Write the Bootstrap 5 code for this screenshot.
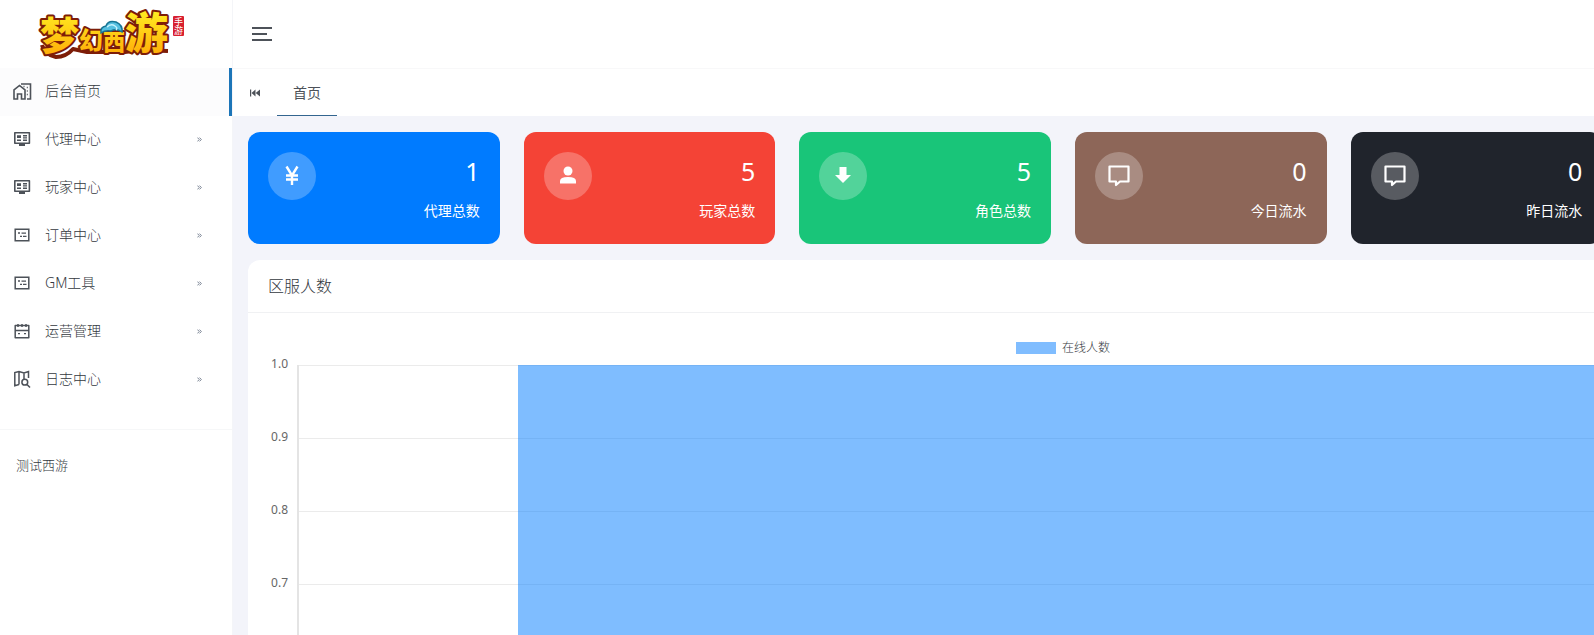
<!DOCTYPE html>
<html lang="zh-CN">
<head>
<meta charset="utf-8">
<meta name="viewport" content="width=device-width, initial-scale=1">
<title>后台首页</title>
<link href="https://cdn.jsdelivr.net/npm/bootstrap@5.3.0/dist/css/bootstrap.min.css" rel="stylesheet">
<style>
body{font-family:"Noto Sans","Noto Sans CJK SC",sans-serif;font-size:14px;line-height:20px;color:#4d5259;background:#f3f4fa}
.sidebar{width:232px;background:#fff;box-shadow:1px 0 0 #f4f5f8;z-index:1}
.brand-box{height:68px;padding-left:36px}
.side-link{height:48px;padding:0 30px 2px 12px;color:#33383e;text-decoration:none;font-weight:300}
.side-link svg{width:20px;height:20px;margin-right:13px;color:#4d5259}
.side-link svg.more{width:5px;height:5px;margin:0 0 0 auto;color:#7b8595}
.side-link.current{background:#fcfcfd;border-right:3px solid #1c75b8}
.side-foot{margin-top:25px;padding:25px 16px;border-top:1px solid #f6f7f8;font-size:13px;font-weight:300;color:#33383e}
.topbar{height:68px;background:#fff;padding-left:19px}
.icon-btn{border:0;background:none;padding:0;color:#4d5259;line-height:0}
.tabs{height:48px;background:#fff;border-top:1px solid #f8f8f9;padding-left:17px}
.tab-item{height:47px;width:60px;margin-left:16px;padding-top:2px;border-bottom:1px solid #33658f;color:#4d5259;text-decoration:none}
.board{min-width:1646px;padding:16px 0 0 16px}
.stats{gap:24px}
.stat{flex:0 0 calc((100% - 120px)/6);height:112px;border-radius:12px;padding:20px;color:#fff}
.round-icon{width:48px;height:48px;border-radius:50%;background:rgba(255,255,255,.25)}
.figure-no{font-size:25px;line-height:38px}
.stat-name{line-height:42px}
.c-blue{background:#007bff}.c-red{background:#f44336}.c-green{background:#19c579}.c-brown{background:#8d6658}.c-dark{background:#20242c}
.panel{margin-top:16px;background:#fff;border-radius:12px 12px 0 0}
.panel-title{font-size:16px;font-weight:300;line-height:24px;padding:14px 20px;margin:0;border-bottom:1px solid #f0f1f3;color:#33383e}
.legend-row{gap:6px;font-size:12px;line-height:16px;padding-top:27px;font-weight:300;color:#33383e}
.swatch{width:40px;height:12px;background:#80bdff}
.chart{margin:0 16px 0 20px}
.tick{height:73px;width:20px;font-size:12px;line-height:16px;text-align:right;color:#666}
.plot{display:grid;margin:9px 0 0 9px;border-left:2px solid #e4e4e4}
.plot>*{grid-area:1/1}
.plot-line{height:73px;border-top:1px solid #ebebeb}
.bar-layer{margin:0 14%;background:rgba(0,123,255,.5)}
</style>
</head>
<body>
<svg class="d-none">
<defs>
<symbol id="home" viewBox="0 0 20 20"><path d="M2 18V9l5.500-4.500L13 9v9h-3.500v-5h-4v5zM9 3h9.500v15H15M11.500 5.500h1M14.800 6.500h1M14.800 10h1M14.800 13.500h1" fill="none" stroke="currentColor" stroke-width="1.600"/></symbol>
<symbol id="screen" viewBox="0 0 20 20"><path d="M2.800 3.800h14.600v10.400H2.800z" fill="none" stroke="currentColor" stroke-width="1.600" stroke-linejoin="round"/><path d="M5 6.300h4v2.700H5zM11 6h4v1.400h-4zM11 8.200h4v1.400h-4zM5 10.500h4v1.400H5zM11 10.500h4v1.400h-4zM7 15h6v2H7z" fill="currentColor"/></symbol>
<symbol id="lists" viewBox="0 0 20 20"><path d="M3.200 4.200h13.600v11.600H3.200z" fill="none" stroke="currentColor" stroke-width="1.500"/><path d="M6 7.300h2v1.400H6zM9.500 7.500H14v1.200H9.500zM8 10.800h2v1.300H8zM11 10.800h3.500v1.300H11z" fill="currentColor"/></symbol>
<symbol id="cal" viewBox="0 0 20 20"><path d="M3.200 4.500h13.600v12.300H3.200zM3 9.500h14M6 3v3M10 3v3M14 3v3" fill="none" stroke="currentColor" stroke-width="1.500" stroke-linejoin="round"/><path d="M6 12h2v1.300H6zM12 12h2v1.300h-2z" fill="currentColor"/></symbol>
<symbol id="mapfind" viewBox="0 0 20 20"><path d="M7 15.500l-4.200 1.200V3.500L7 2.500l5 1.500 4.500-1.500V9M7 2.500v13M12 4v6" fill="none" stroke="currentColor" stroke-width="1.500"/><circle cx="12.800" cy="13.200" r="2.900" fill="none" stroke="currentColor" stroke-width="1.500"/><path d="M15 15.500l3 3" stroke="currentColor" stroke-width="1.600"/></symbol>
<symbol id="more" viewBox="0 0 6 6"><path d="M.5.700L2.700 3 .500 5.300M3 .700L5.200 3 3 5.300" fill="none" stroke="currentColor" stroke-width="1.200"/></symbol>
<symbol id="talk" viewBox="0 0 24 24"><path d="M2.500 2.500h19v15h-8.500l-4 3.500v-3.500H2.500z" fill="none" stroke="#fff" stroke-width="2.200" stroke-linejoin="round"/></symbol>
</defs>
</svg>
<div class="d-flex vh-100 overflow-hidden">
<aside class="sidebar flex-shrink-0">
<div class="brand-box">
<svg width="152" height="66" viewBox="36 0 152 66" role="img" aria-label="梦幻西游 手游">
<defs><linearGradient id="gold" x1="0" y1="10" x2="0" y2="56" gradientUnits="userSpaceOnUse"><stop offset="0" stop-color="#ffee22"/><stop offset="1" stop-color="#ffac08"/></linearGradient></defs>
<path d="M42 45q2 9 14 12 10 0 17-8l14 3 38 0 15-2 28 1" fill="none" stroke="#7d1d08" stroke-width="4" stroke-linejoin="round"/>
<g font-family="'Noto Sans CJK SC',sans-serif" font-weight="900" fill="url(#gold)" stroke="#7d1d08" stroke-width="4" stroke-linejoin="round" paint-order="stroke">
<text x="40" y="50" font-size="39">梦</text><text x="79" y="49" font-size="24">幻</text>
<text x="103" y="50" font-size="22">西</text><text x="125" y="49" font-size="43">游</text></g>
<path d="M101 33q-1-6 5-7 2-6 10-4 7 3 6 10-6-4-11-1-6-1-10 2z" fill="#55bfe0" stroke="#167493" stroke-width="1.500"/>
<path d="M107 27q4-4 8-1 3 2 1 4" fill="none" stroke="#c6f2fc" stroke-width="1.500"/>
<rect x="173" y="16" width="11" height="20" rx="1" fill="#d8202f"/>
<text x="178.500" y="17" font-family="'Noto Sans CJK SC',sans-serif" font-size="9" fill="#fff" style="writing-mode:vertical-rl">手游</text>
</svg>
</div>
<nav>
<a class="side-link current d-flex align-items-center" href="#"><svg><use href="#home"/></svg>后台首页</a>
<a class="side-link d-flex align-items-center" href="#"><svg><use href="#screen"/></svg>代理中心<svg class="more"><use href="#more"/></svg></a>
<a class="side-link d-flex align-items-center" href="#"><svg><use href="#screen"/></svg>玩家中心<svg class="more"><use href="#more"/></svg></a>
<a class="side-link d-flex align-items-center" href="#"><svg><use href="#lists"/></svg>订单中心<svg class="more"><use href="#more"/></svg></a>
<a class="side-link d-flex align-items-center" href="#"><svg><use href="#lists"/></svg>GM工具<svg class="more"><use href="#more"/></svg></a>
<a class="side-link d-flex align-items-center" href="#"><svg><use href="#cal"/></svg>运营管理<svg class="more"><use href="#more"/></svg></a>
<a class="side-link d-flex align-items-center" href="#"><svg><use href="#mapfind"/></svg>日志中心<svg class="more"><use href="#more"/></svg></a>
</nav>
<div class="side-foot">测试西游</div>
</aside>
<div class="flex-grow-1 overflow-hidden">
<header class="topbar d-flex align-items-center">
<button class="icon-btn" type="button" aria-label="菜单"><svg width="22" height="16"><path d="M1 2h20M1 8h15M1 14h20" stroke="currentColor" stroke-width="2"/></svg></button>
</header>
<div class="tabs d-flex align-items-center">
<button class="icon-btn" type="button" aria-label="向左"><svg width="12" height="10"><path d="M1 1.500h1.200v7H1zM6.500 1.500v7L2.500 5zM11 1.500v7L6.700 5z" fill="currentColor"/></svg></button>
<a class="tab-item d-flex align-items-center justify-content-center" href="#">首页</a>
</div>
<main class="board">
<section class="stats d-flex">
<div class="stat c-blue d-flex justify-content-between">
<span class="round-icon d-flex align-items-center justify-content-center"><svg width="24" height="24"><path d="M6.500 2.500l5.500 9 5.500-9M12 11v10M6 11.500h12M6 15.500h12" fill="none" stroke="#fff" stroke-width="2.400"/></svg></span>
<div class="text-end"><div class="figure-no">1</div><div class="stat-name">代理总数</div></div></div>
<div class="stat c-red d-flex justify-content-between">
<span class="round-icon d-flex align-items-center justify-content-center"><svg width="24" height="24"><circle cx="12" cy="7" r="4.500" fill="#fff"/><path d="M4 19.500v-2.500q0-4 8-4t8 4v2.500z" fill="#fff"/></svg></span>
<div class="text-end"><div class="figure-no">5</div><div class="stat-name">玩家总数</div></div></div>
<div class="stat c-green d-flex justify-content-between">
<span class="round-icon d-flex align-items-center justify-content-center"><svg width="24" height="24"><path d="M8.500 3h7v8H20l-8 8-8-8h4.500z" fill="#fff"/></svg></span>
<div class="text-end"><div class="figure-no">5</div><div class="stat-name">角色总数</div></div></div>
<div class="stat c-brown d-flex justify-content-between">
<span class="round-icon d-flex align-items-center justify-content-center"><svg width="24" height="24"><use href="#talk"/></svg></span>
<div class="text-end"><div class="figure-no">0</div><div class="stat-name">今日流水</div></div></div>
<div class="stat c-dark d-flex justify-content-between">
<span class="round-icon d-flex align-items-center justify-content-center"><svg width="24" height="24"><use href="#talk"/></svg></span>
<div class="text-end"><div class="figure-no">0</div><div class="stat-name">昨日流水</div></div></div>
</section>
<section class="panel">
<h2 class="panel-title">区服人数</h2>
<div class="legend-row d-flex justify-content-center align-items-center"><span class="swatch"></span>在线人数</div>
<div class="chart d-flex">
<div><div class="tick">1.0</div><div class="tick">0.9</div><div class="tick">0.8</div><div class="tick">0.7</div></div>
<div class="plot flex-grow-1">
<div><div class="plot-line"></div><div class="plot-line"></div><div class="plot-line"></div><div class="plot-line"></div></div>
<div class="bar-layer"></div>
</div>
</div>
</section>
</main>
</div>
</div>
<script src="https://cdn.jsdelivr.net/npm/bootstrap@5.3.0/dist/js/bootstrap.bundle.min.js"></script>
</body>
</html>
